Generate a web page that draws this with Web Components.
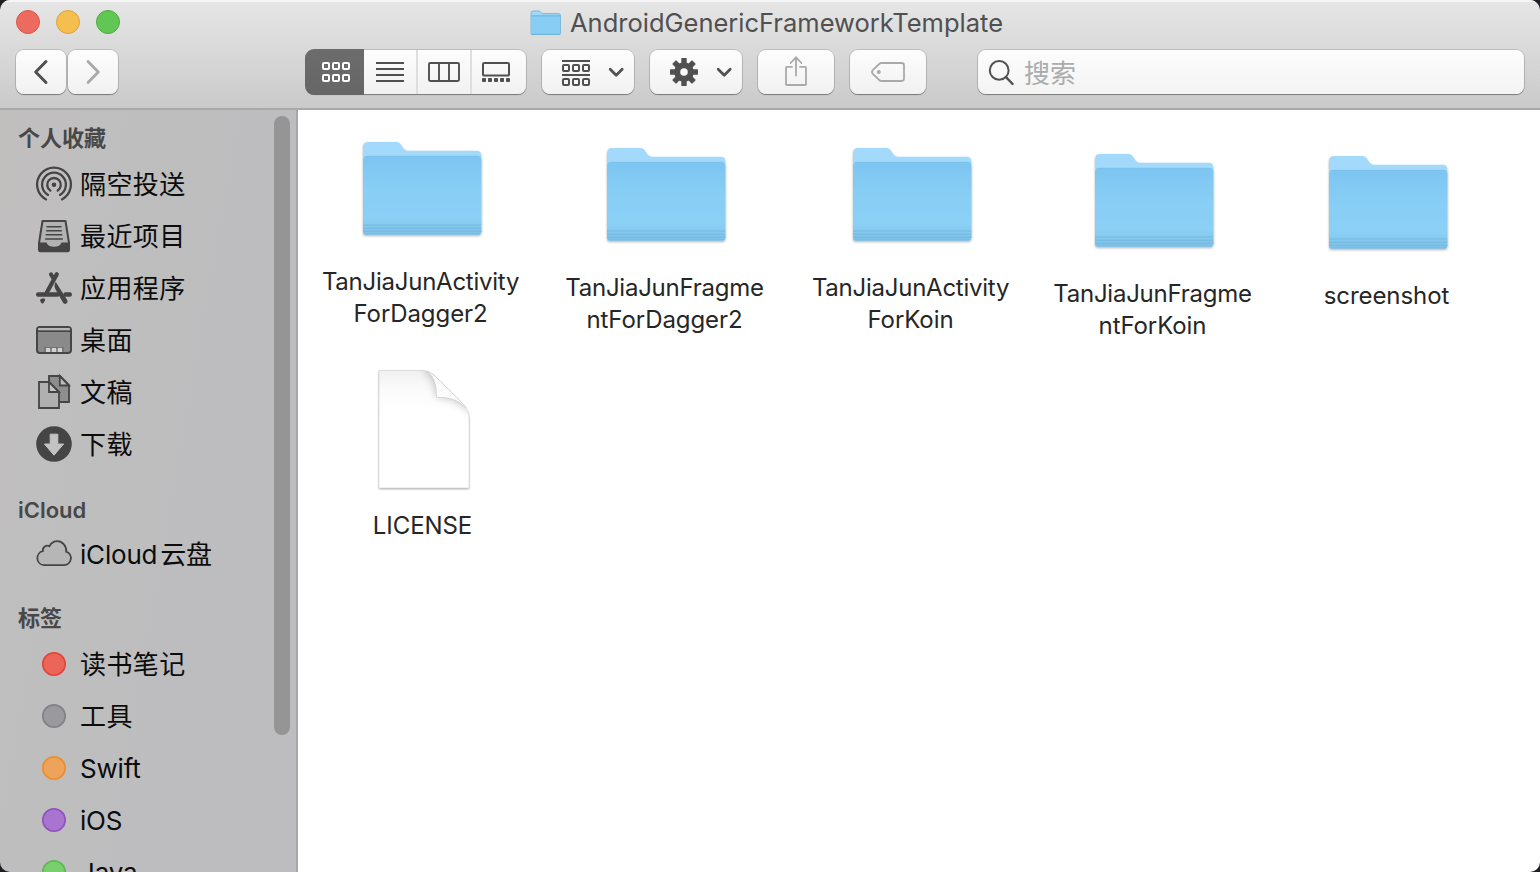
<!DOCTYPE html>
<html lang="zh-CN">
<head>
<meta charset="utf-8">
<title>AndroidGenericFrameworkTemplate</title>
<style>
html,body{margin:0;height:100%;background:#1f1f21;overflow:hidden}
body{font-family:Inter,"Noto Sans CJK SC",sans-serif}
</style>
</head>
<body>
<finder-window></finder-window>
<script>
const define = (name, html, setup) => customElements.define(name, class extends HTMLElement {
  connectedCallback() {
    if (this.shadowRoot) return;
    const root = this.attachShadow({mode: 'open'});
    const t = document.createElement('template');
    t.innerHTML = typeof html === 'function' ? html(this) : html;
    root.append(t.content.cloneNode(true));
    if (setup) setup(this, root);
  }
});

const squares = (x, y, c) => [0, 10, 20].map(d =>
  `<rect x="${x + d + 1}" y="${y + 1}" width="6" height="6" rx="1" fill="none" stroke="${c}" stroke-width="2"/>`).join('');
const chevron = '<path d="M1.2 1.3 7.2 7.3 13.2 1.3" fill="none" stroke="#505050" stroke-width="2.7" stroke-linecap="round" stroke-linejoin="round"/>';

const icons = {
  back: [14, 24, '<path d="M12 1.5 1.7 12 12 22.5" fill="none" stroke="#505050" stroke-width="3" stroke-linecap="round" stroke-linejoin="round"/>'],
  forward: [14, 24, '<path d="M2 1.5 12.3 12 2 22.5" fill="none" stroke="#a9a9a9" stroke-width="2.8" stroke-linecap="round" stroke-linejoin="round"/>'],
  grid: [28, 20, squares(0, 0, '#fff') + squares(0, 12, '#fff')],
  list: [28, 20, '<path d="M0 1H28M0 7H28M0 13H28M0 19H28" stroke="#505050" stroke-width="1.8"/>'],
  columns: [32, 20, '<g fill="none" stroke="#505050" stroke-width="1.9"><rect x="1" y="1" width="30" height="18" rx="1.2"/><path d="M11 1V19M21 1V19"/></g>'],
  gallery: [28, 20, '<rect x="1" y="1" width="26" height="12.6" rx="1.2" fill="none" stroke="#505050" stroke-width="2"/>' + [0,6,12,18,24].map(x => `<rect x="${x}" y="16" width="4" height="4" rx=".8" fill="#505050"/>`).join('')],
  group: [28, 26, '<path d="M0 1H28M0 15H28" stroke="#505050" stroke-width="1.9"/>' + squares(0, 4, '#505050') + squares(0, 18, '#505050')],
  chevron: [14.4, 9, chevron],
  gear: [28, 28, '<g fill="#505050">' + [0,45,90,135].map(a => `<rect x="11.3" y="0" width="5.4" height="28" rx=".6" transform="rotate(${a} 14 14)"/>`).join('') + '<circle cx="14" cy="14" r="9.8"/></g><circle cx="14" cy="14" r="3.8" fill="#f8f8f8"/>'],
  share: [22, 30, '<g fill="none" stroke="#a9a9a9" stroke-width="1.8" stroke-linecap="round"><path d="M7 10.9H1.8Q1 10.9 1 11.7V28.2Q1 29 1.8 29H20.2Q21 29 21 28.2V11.7Q21 10.9 20.2 10.9H15M11 19.5V1.5M5.6 7 11 1.4 16.4 7"/></g>'],
  tag: [34, 20, '<path d="M10.6 1H30.6Q33 1 33 3.4V16.6Q33 19 30.6 19H10.6Q9.2 19 8.2 18L1.8 12Q.2 10 1.8 8L8.2 2Q9.2 1 10.6 1Z" fill="none" stroke="#a9a9a9" stroke-width="1.8"/><circle cx="7.8" cy="10" r="2" fill="#a9a9a9"/>'],
  search: [26, 26, '<g fill="none" stroke="#505050" stroke-width="2"><circle cx="10.2" cy="10.4" r="9.4"/><path d="M17 17.2 23.6 24" stroke-width="2.4" stroke-linecap="round"/></g>'],
  airdrop: [36, 36, '<g fill="none" stroke="#454545" stroke-width="2.3" stroke-linecap="round"><path d="M10 33.4A16.9 16.9 0 1 1 26 33.4"/><path d="M12 28.9A11.9 11.9 0 1 1 24 28.9"/><path d="M14.3 24.5A6.8 6.8 0 1 1 21.7 24.5"/></g><circle cx="18" cy="18.7" r="2.3" fill="#454545"/>'],
  recents: [36, 36, '<path d="M6.5 3H29.5L33 25V32Q33 33.2 31.8 33.2H4.2Q3 33.2 3 32V25Z" fill="#b3b2b3" stroke="#454545" stroke-width="2" stroke-linejoin="round"/><path d="M3 24.4H10.5Q12 28.8 18 28.8T25.5 24.4H33V33H3Z" fill="#454545"/><path d="M10.5 8.7H25.5M10.2 12.7H25.8M9.7 16.8H26.3M9.2 21H26.8" stroke="#454545" stroke-width="1.6"/>'],
  apps: [36, 36, '<g stroke="#454545" stroke-linecap="round" fill="none"><path d="M20.8 4.3 10.8 22.5" stroke-width="4.2"/><path d="M2.2 24.5H21.5M29.5 24.5H33.8" stroke-width="4.4"/><path d="M5.8 30.3 6.4 31.7 7.4 30Z" stroke-width="3.4" stroke-linejoin="round"/><path d="M15 4.3 17 7.8" stroke-width="4"/></g><path d="M19.8 12Q17.6 15 19.3 19L26.8 32.2Q28 34.6 30.4 33.6 32.4 32.2 31.2 30Z" fill="#454545"/>'],
  desktop: [36, 36, '<rect x="1" y="5" width="34" height="26" rx="3" fill="#8a8a8a" stroke="#454545" stroke-width="2"/><path d="M2 8.5V7Q2 6 3 6H33Q34 6 34 7V8.5Z" fill="#b7b9b9"/><path d="M2 9.2H34" stroke="#454545" stroke-width="1.6"/><path d="M9 30V25.8H27V30" fill="none" stroke="#6c6c6c" stroke-width="1.2"/><path d="M10 26H14V30H10ZM16 26H20V30H16ZM22 26H26V30H22Z" fill="#d2d2d2"/>'],
  docs: [36, 36, '<g stroke="#454545" stroke-width="1.8"><path d="M13 2H24L33 11V28H13Z" fill="#8e8e8e"/><path d="M23.8 2V11.5H33Z" fill="#bdbdbd"/><path d="M3 8H13L23 18V34H3Z" fill="#b1b0b1"/><path d="M13 8V18H23Z" fill="#c4c4c4"/></g>'],
  download: [36, 36, '<circle cx="18" cy="18" r="17.8" fill="#454545"/><path d="M14.2 8.2H21.8V18H27.6L18 29.2 8.4 18H14.2Z" fill="#c4c3c4" stroke="#c4c3c4" stroke-width="1" stroke-linejoin="round"/>'],
  cloud: [36, 36, '<path transform="translate(-.2 -1.4)" d="M8.2 30.6H28.4A7 7 0 0 0 30.4 17C31 11.5 26.6 6.6 21.5 6.6 17.8 6.6 15.2 8.6 13.7 11.6 10.5 9.8 6.6 12.4 7 16.6A7.1 7.1 0 0 0 8.2 30.6Z" fill="#b6b6b6" stroke="#454545" stroke-width="1.8"/>'],
};
for (const [c, f, s] of [['red','#eb6659','#e2463a'],['gray','#9a999e','#838287'],['orange','#eda359','#e8902f'],['purple','#a974cf','#9352c0'],['green','#79cf6d','#5bbd4e']])
  icons[c] = [36, 36, `<circle cx="18" cy="18" r="11.2" fill="${f}" stroke="${s}" stroke-width="1.7"/>`];

icons.folder = [120, 100, `
<defs><linearGradient id="f" x2="0" y2="1"><stop offset="0" stop-color="#7dc5f2"/><stop offset=".45" stop-color="#88cef5"/><stop offset=".78" stop-color="#8bd0f5"/><stop offset="1" stop-color="#80c2e9"/></linearGradient>
<filter id="s" x="-5%" y="-5%" width="110%" height="115%"><feDropShadow dx="0" dy="1.2" stdDeviation="1" flood-color="#000" flood-opacity=".3"/></filter></defs>
<g filter="url(#s)"><path d="M1 6.2Q1 1 6 1H34.5Q37 1 38.6 3.2L42 8Q43.4 9.8 46 9.8H114.5Q119.4 9.8 119.4 14.5V91Q119.4 93.5 117 93.5H3.4Q1 93.5 1 91Z" fill="#a3dafb"/>
<path d="M1 19.5Q1 15 5.5 15H115Q119.4 15 119.4 19.5V91Q119.4 93.5 117 93.5H3.4Q1 93.5 1 91Z" fill="url(#f)"/></g>
<path d="M2 15.9Q3 15.2 5.5 15.2H115Q117.5 15.2 118.4 16" fill="none" stroke="#7bbde8" stroke-width=".6"/>
<path d="M1 84H119.4M1 87.2H119.4M1 90.2H119.4M2.4 93H118" stroke="#69aed8" stroke-width="1" opacity=".6"/>`];
icons.file = [94, 122, `
<defs><filter id="s" x="-5%" y="-5%" width="110%" height="110%"><feDropShadow dx="0" dy="1" stdDeviation="1" flood-color="#000" flood-opacity=".38"/></filter>
<linearGradient id="t" x2="0" y2="1"><stop offset="0" stop-color="#f0f0f0"/><stop offset=".15" stop-color="#fafafa"/><stop offset=".35" stop-color="#fff"/></linearGradient>
<filter id="b"><feGaussianBlur stdDeviation="4.5"/></filter><clipPath id="c"><path d="M2 1.5H46Q52 2 56 6L85 35Q92 42 92 50V119H2Z"/></clipPath></defs>
<path d="M2 1.5H46Q53 2 58 7L85 34Q92 41 92 50V119H2Z" fill="#fff" filter="url(#s)"/>
<path d="M2 1.5H46Q53 2 58 7L85 34Q92 41 92 50V119H2Z" fill="url(#t)" stroke="#d6d6d6" stroke-width=".7"/>
<g clip-path="url(#c)"><path d="M44 -2Q58 6 59.5 27.5 80 28 94 44V30L62 -4Z" fill="#8a8a8a" opacity=".5" filter="url(#b)"/></g>
<path d="M50 2.6Q60 9 59.5 28.5 78 27 89 39L86 35 58 7Q54 3.6 50 2.6Z" fill="#fcfcfc" stroke="#cfcfcf" stroke-width=".7"/>`];
icons.minifolder = [32, 26, `
<path d="M1 3Q1 1 3 1H9.5L12 3.6H28.5Q30.5 3.6 30.5 5.5V23Q30.5 24.4 29 24.4H2.5Q1 24.4 1 23Z" fill="#a0d9f8" stroke="#72b4da" stroke-width=".9"/>
<path d="M1.4 6H30.1V23.4Q30 24.2 29 24.2H2.5Q1.4 24.2 1.4 23.2Z" fill="#88cdf4"/><path d="M1.4 5.8H30.2M1.2 24.4H30.3" stroke="#69add6" stroke-width=".9"/>`];

define('mac-icon', el => {
  const [w, h, body] = icons[el.getAttribute('name')];
  return `<style>:host{display:block;flex:none;width:${w}px;height:${h}px}svg{display:block;overflow:visible}</style><svg width="${w}" height="${h}" viewBox="0 0 ${w} ${h}">${body}</svg>`;
});

define('traffic-lights', `<style>
:host{display:flex;gap:16px}
i{width:24px;height:24px;border-radius:50%;box-sizing:border-box;border:1px solid}
.r{background:#ed6a5f;border-color:#d9574c}.y{background:#f5bf50;border-color:#dba33c}.g{background:#62c655;border-color:#4dab3d}
</style><i class="r"></i><i class="y"></i><i class="g"></i>`);

define('tool-button', `<style>
:host{display:flex;align-items:center;justify-content:center;box-sizing:border-box;height:44px;border-radius:8px;width:var(--w);
background:linear-gradient(#fdfdfd,#f1f1f1);box-shadow:0 0 0 1px rgba(0,0,0,.13),0 1px 1px rgba(0,0,0,.32)}
</style><slot></slot>`);

define('view-switcher', `<style>
:host{display:flex;height:44px;border-radius:8px;background:linear-gradient(#fdfdfd,#f1f1f1);box-shadow:0 0 0 1px rgba(0,0,0,.13),0 1px 1px rgba(0,0,0,.32)}
span{display:flex;align-items:center;justify-content:center;box-sizing:border-box;width:54px;border-left:2px solid #dedede}
span.on{width:59px;border:0;margin:-1px 0 -1px -1px;padding-left:2px;border-radius:9px 0 0 9px;background:linear-gradient(#6c6c6c,#666)}
span.on+span{border:0;width:52px}
span:last-child{padding-right:4px}
</style><span class="on"><mac-icon name="grid"></mac-icon></span><span><mac-icon name="list"></mac-icon></span><span><mac-icon name="columns"></mac-icon></span><span><mac-icon name="gallery"></mac-icon></span>`);

define('search-field', `<style>
:host{display:flex;align-items:center;box-sizing:border-box;height:44px;border-radius:8px;flex:1;padding-left:11px;gap:9px;font-size:26px;line-height:44px;color:#acacac;
background:linear-gradient(#fdfdfd,#f3f3f3);box-shadow:0 0 0 1px rgba(0,0,0,.13),0 1px 1px rgba(0,0,0,.32)}
mac-icon{margin-top:2px}span{margin-top:3px}
</style><mac-icon name="search"></mac-icon><span><slot></slot></span>`);

define('window-toolbar', `<style>
:host{display:flex;flex-direction:column;box-sizing:border-box;height:110px;background:linear-gradient(#e6e6e6,#cacaca);border-bottom:2px solid #a9a9a9;box-shadow:inset 0 2px 0 #f5f5f5}
.title{display:grid;grid-template-columns:1fr auto 1fr;height:50px;align-items:start}
traffic-lights{margin:10px 0 0 16px}
.name{display:flex;align-items:center;margin-top:7px;gap:8px;height:32px;font-size:25.5px;line-height:32px;color:#505050;letter-spacing:0;white-space:nowrap;padding-right:7px}
.tools{display:flex;padding:0 16px}
.tools>*{flex:none}.tools>search-field{flex:1}
.menu{padding-left:10px}
</style>
<div class="title"><traffic-lights></traffic-lights><div class="name"><mac-icon name="minifolder"></mac-icon><span><slot></slot></span></div></div>
<div class="tools">
<tool-button style="--w:50px"><mac-icon name="back"></mac-icon></tool-button>
<tool-button style="--w:50px;margin-left:2px"><mac-icon name="forward"></mac-icon></tool-button>
<view-switcher style="margin-left:188px;width:220px"></view-switcher>
<tool-button class="menu" style="--w:92px;margin-left:16px"><mac-icon name="group" style="margin-right:19px;margin-top:2px"></mac-icon><mac-icon name="chevron"></mac-icon></tool-button>
<tool-button class="menu" style="--w:92px;margin-left:16px"><mac-icon name="gear" style="margin-right:19px"></mac-icon><mac-icon name="chevron"></mac-icon></tool-button>
<tool-button style="--w:76px;margin-left:16px"><mac-icon name="share" style="margin-top:-2px"></mac-icon></tool-button>
<tool-button style="--w:76px;margin-left:16px"><mac-icon name="tag"></mac-icon></tool-button>
<search-field style="margin-left:52px">搜索</search-field>
</div>`);

define('side-heading', `<style>
:host{display:block;height:36px;padding-left:18px;font-size:22px;line-height:36px;font-weight:600;color:#484848}
</style><slot></slot>`);

define('side-item', el => `<style>
:host{display:flex;align-items:center;height:52px;padding-left:36px;gap:8px;font-size:26px;line-height:52px;color:#0c0c0c;white-space:nowrap}
.t{margin-top:2px;letter-spacing:${/^[\x00-\x7f]/.test(el.textContent) ? '-.2px' : '.4px'}}
</style><mac-icon name="${el.getAttribute('icon')}"></mac-icon><span class="t"><slot></slot></span>`);

define('side-bar', `<style>
:host{display:flex;box-sizing:border-box;width:298px;height:762px;overflow:hidden;background:linear-gradient(100deg,#c1bfbe,#bdbdbf 65%);border-right:2px solid #a6a6a7}
nav{flex:1;padding-top:10px}
.bar{width:16px;height:619px;margin:6px 6px 0 0;border-radius:8px;background:#959596}
</style><nav>
<side-heading style="margin-bottom:2px">个人收藏</side-heading>
<side-item icon="airdrop">隔空投送</side-item>
<side-item icon="recents">最近项目</side-item>
<side-item icon="apps">应用程序</side-item>
<side-item icon="desktop">桌面</side-item>
<side-item icon="docs">文稿</side-item>
<side-item icon="download">下载</side-item>
<side-heading style="margin-top:22px">iCloud</side-heading>
<side-item icon="cloud">iCloud<span style="margin-left:3px">云盘</span></side-item>
<side-heading style="margin:20px 0 2px">标签</side-heading>
<side-item icon="red">读书笔记</side-item>
<side-item icon="gray">工具</side-item>
<side-item icon="orange">Swift</side-item>
<side-item icon="purple">iOS</side-item>
<side-item icon="green">Java</side-item>
</nav><div class="bar"></div>`);

define('file-item', el => `<style>
:host{display:flex;flex-direction:column;align-items:center;flex:none;width:200px;font-size:24px;line-height:32px;color:#262626;text-align:center;white-space:nowrap;letter-spacing:-.08px}
.l{margin-top:${el.getAttribute('icon') === 'file' ? 19 : 25}px;margin-left:-3px}
::slotted(span){letter-spacing:-.25px}
</style><mac-icon name="${el.getAttribute('icon')}"></mac-icon><div class="l"><slot></slot></div>`);

define('icon-view', `<style>
:host{display:block;flex:1;background:#fff;padding:31px 0 0 24px;box-sizing:border-box}
.row{display:flex;align-items:flex-start;height:228px}
</style>
<div class="row">
<file-item icon="folder"><span>TanJiaJunActivity</span><br>ForDagger2</file-item>
<file-item icon="folder" style="margin:6px 0 0 44px"><span>TanJiaJunFragme</span><br>ntForDagger2</file-item>
<file-item icon="folder" style="margin:6px 0 0 46px"><span>TanJiaJunActivity</span><br>ForKoin</file-item>
<file-item icon="folder" style="margin:12px 0 0 42px"><span>TanJiaJunFragme</span><br>ntForKoin</file-item>
<file-item icon="folder" style="margin:14px 0 0 34px">screenshot</file-item>
</div>
<div class="row"><file-item icon="file" style="margin-left:2px">LICENSE</file-item></div>`);

define('finder-window', `<style>
:host{display:flex;flex-direction:column;width:1540px;height:872px;border-radius:10px;overflow:hidden}
.body{display:flex;height:762px}
</style>
<window-toolbar>AndroidGenericFrameworkTemplate</window-toolbar>
<div class="body"><side-bar></side-bar><icon-view></icon-view></div>`);
</script>
</body>
</html>
